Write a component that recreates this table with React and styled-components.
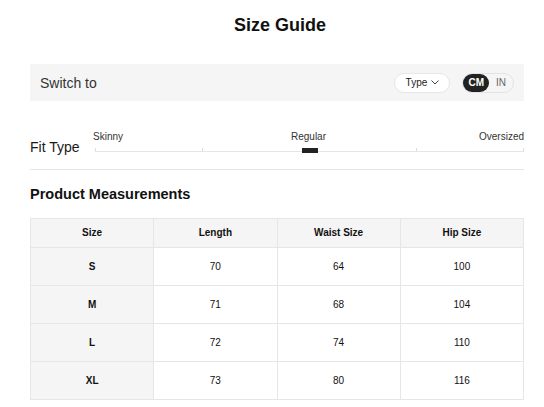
import React from 'react';
import styled, { createGlobalStyle } from 'styled-components';

const GlobalStyle = createGlobalStyle`
  body {
    margin: 0;
    background: #fff;
    font-family: "Liberation Sans", Arial, sans-serif;
    color: #222;
  }
`;

const Page = styled.div`
  width: 544px;
  box-sizing: border-box;
  padding: 13px 20px 0 30px;
`;

const Title = styled.h1`
  margin: 0;
  font-size: 18px;
  line-height: 24px;
  font-weight: 700;
  text-align: center;
  color: #111;
  padding-left: 6px;
`;

const SwitchBar = styled.div`
  margin-top: 27px;
  height: 37px;
  background: #f5f5f5;
  display: flex;
  align-items: center;
  padding: 0 10px;
`;

const SwitchLabel = styled.span`
  font-size: 14px;
  color: #333;
  flex: 1;
`;

const TypeButton = styled.button`
  all: unset;
  box-sizing: border-box;
  width: 56px;
  height: 20px;
  border-radius: 10px;
  background: #fff;
  border: 1px solid #e6e6e6;
  display: flex;
  align-items: center;
  justify-content: center;
  gap: 4px;
  font-size: 10px;
  color: #222;
  margin-right: 12px;
`;

const UnitToggle = styled.div`
  box-sizing: border-box;
  height: 20px;
  border: 1px solid #e3e3e3;
  border-radius: 10px;
  display: flex;
  align-items: center;
`;

const UnitOption = styled.span`
  height: 18px;
  line-height: 18px;
  border-radius: 9px;
  font-size: 10px;
  padding: 0 ${p => (p.$active ? '5px' : '7px')};
  background: ${p => (p.$active ? '#222' : 'transparent')};
  color: ${p => (p.$active ? '#fff' : '#666')};
  font-weight: ${p => (p.$active ? 700 : 400)};
`;

const FitRow = styled.div`
  margin-top: 30px;
  display: flex;
  align-items: flex-start;
`;

const FitLabel = styled.div`
  width: 65px;
  flex-shrink: 0;
  margin-top: 8px;
  font-size: 14px;
  line-height: 16px;
  color: #1a1a1a;
`;

const Slider = styled.div`
  flex: 1;
`;

const SliderLabels = styled.div`
  display: grid;
  grid-template-columns: 1fr 1fr 1fr;
  font-size: 10px;
  line-height: 12px;
  color: #333;
  margin-bottom: 5px;
  margin-left: -2px;

  span:nth-child(2) { text-align: center; }
  span:nth-child(3) { text-align: right; }
`;

const Track = styled.div`
  position: relative;
  height: 3px;
  border-bottom: 1px solid #e6e6e6;
  display: flex;
  justify-content: space-between;
  align-items: flex-end;
`;

const Tick = styled.span`
  width: 1px;
  height: 3px;
  background: #ddd;
`;

const Marker = styled.span`
  position: absolute;
  left: 50%;
  top: 0;
  width: 16px;
  height: 5px;
  transform: translateX(-50%);
  background: #222;
`;

const Divider = styled.hr`
  margin: 14px 0 0;
  border: 0;
  border-top: 1px solid #e6e6e6;
`;

const SectionTitle = styled.h2`
  margin: 16px 0 0;
  font-size: 14.5px;
  line-height: 16px;
  font-weight: 700;
  color: #111;
`;

const Table = styled.table`
  margin-top: 16px;
  width: 100%;
  border-collapse: collapse;
  table-layout: fixed;
  font-size: 10px;
  color: #111;
`;

const Th = styled.th`
  border: 1px solid #e6e6e6;
  background: #f5f5f5;
  padding: 8px 0;
  line-height: 12px;
  font-weight: 700;
  text-align: center;
`;

const Td = styled.td`
  border: 1px solid #e6e6e6;
  padding: 12px 0;
  line-height: 13px;
  text-align: center;
  background: ${p => (p.$head ? '#f5f5f5' : '#fff')};
  font-weight: ${p => (p.$head ? 700 : 400)};
`;

const Chevron = () => (
  <svg width="8" height="5" viewBox="0 0 8 5" fill="none">
    <path d="M0.5 0.5L4 4L7.5 0.5" stroke="#444" strokeWidth="1" />
  </svg>
);

const rows = [
  ['S', 70, 64, 100],
  ['M', 71, 68, 104],
  ['L', 72, 74, 110],
  ['XL', 73, 80, 116],
];

export default function App() {
  return (
    <Page>
      <GlobalStyle />
      <Title>Size Guide</Title>

      <SwitchBar>
        <SwitchLabel>Switch to</SwitchLabel>
        <TypeButton>
          Type <Chevron />
        </TypeButton>
        <UnitToggle>
          <UnitOption $active>CM</UnitOption>
          <UnitOption>IN</UnitOption>
        </UnitToggle>
      </SwitchBar>

      <FitRow>
        <FitLabel>Fit Type</FitLabel>
        <Slider>
          <SliderLabels>
            <span>Skinny</span>
            <span>Regular</span>
            <span>Oversized</span>
          </SliderLabels>
          <Track>
            {[0, 1, 2, 3, 4].map(i => <Tick key={i} />)}
            <Marker />
          </Track>
        </Slider>
      </FitRow>

      <Divider />

      <SectionTitle>Product Measurements</SectionTitle>

      <Table>
        <thead>
          <tr>
            <Th>Size</Th>
            <Th>Length</Th>
            <Th>Waist Size</Th>
            <Th>Hip Size</Th>
          </tr>
        </thead>
        <tbody>
          {rows.map(([size, len, waist, hip]) => (
            <tr key={size}>
              <Td $head>{size}</Td>
              <Td>{len}</Td>
              <Td>{waist}</Td>
              <Td>{hip}</Td>
            </tr>
          ))}
        </tbody>
      </Table>
    </Page>
  );
}
